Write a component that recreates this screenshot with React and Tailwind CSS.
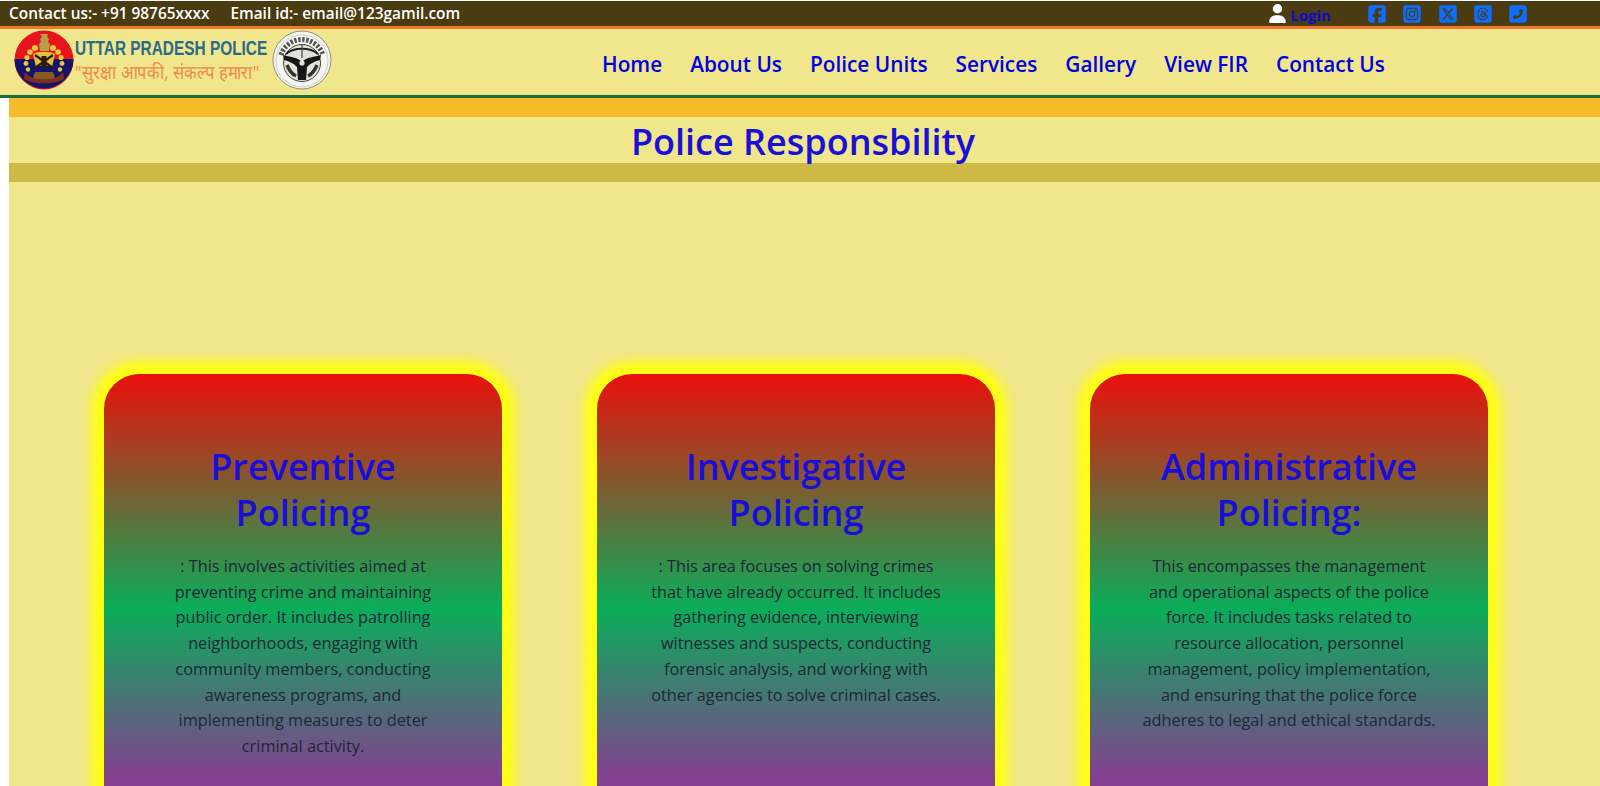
import React from 'react';
import { FaUser, FaSquareFacebook, FaSquareInstagram, FaSquareXTwitter, FaSquareThreads, FaSquarePhoneFlip } from 'react-icons/fa6';

const navLinks = ['Home', 'About Us', 'Police Units', 'Services', 'Gallery', 'View FIR', 'Contact Us'];

const cards = [
  {
    title: ['Preventive', 'Policing'],
    body: ': This involves activities aimed at preventing crime and maintaining public order. It includes patrolling neighborhoods, engaging with community members, conducting awareness programs, and implementing measures to deter criminal activity.',
  },
  {
    title: ['Investigative', 'Policing'],
    body: ': This area focuses on solving crimes that have already occurred. It includes gathering evidence, interviewing witnesses and suspects, conducting forensic analysis, and working with other agencies to solve criminal cases.',
  },
  {
    title: ['Administrative', 'Policing:'],
    body: 'This encompasses the management and operational aspects of the police force. It includes tasks related to resource allocation, personnel management, policy implementation, and ensuring that the police force adheres to legal and ethical standards.',
  },
];

const PoliceBadge = () => (
  <svg width="60" height="60" viewBox="0 0 60 60" className="shrink-0">
    <circle cx="30" cy="30" r="29.5" fill="#e8141c" />
    <path d="M0.5 29a29.5 29.5 0 0 0 59 0z" fill="#14146a" />
    {/* lion capital */}
    <path d="M26 4h8l-1 3 2 2-1 3 2 2-1 7h-9l-1-7 2-2-1-3 2-2z" fill="#b8a04a" />
    {/* wreath */}
    <g fill="#e6c83a">
      <circle cx="21" cy="18" r="3" /><circle cx="39" cy="18" r="3" />
      <circle cx="16" cy="22" r="2.8" /><circle cx="44" cy="22" r="2.8" />
      <circle cx="13" cy="27.5" r="2.6" /><circle cx="47" cy="27.5" r="2.6" />
      <circle cx="12" cy="33.5" r="2.4" /><circle cx="48" cy="33.5" r="2.4" />
      <circle cx="14" cy="39.5" r="2.2" /><circle cx="46" cy="39.5" r="2.2" />
    </g>
    {/* crossed batons and centre */}
    <path d="M19 24c5-3 17-3 22 0l-3 13c-4-2-12-2-16 0z" fill="#e0c438" />
    <path d="M21 38l18-13M39 38L21 25" stroke="#2a1c08" strokeWidth="2.2" />
    <rect x="27.5" y="26" width="5" height="11" fill="#2a1c08" />
    {/* scroll */}
    <path d="M11 42c6 10 32 10 38 0l1 6c-5 7-35 7-40 0z" fill="#7a2f1c" />
    <path d="M21 42h18l2 6c-6 2-16 2-22 0z" fill="#8a5a20" />
  </svg>
);

const StateEmblem = () => (
  <svg width="60" height="60" viewBox="0 0 60 60" className="shrink-0">
    <circle cx="30" cy="30" r="29" fill="#f6f6f0" stroke="#8f8f86" strokeWidth="1" />
    <circle cx="30" cy="31" r="26" fill="none" stroke="#b0b0a8" strokeWidth="0.6" />
    {/* ring of script at the top */}
    <path d="M9 25a22 22 0 0 1 42 0" fill="none" stroke="#555" strokeWidth="5" strokeDasharray="2.4 1.6" />
    <circle cx="30" cy="33" r="18.5" fill="#e2e2da" stroke="#444" strokeWidth="1" />
    {/* bow */}
    <path d="M14 24c8-7 24-7 32 0" fill="none" stroke="#222" strokeWidth="2" />
    {/* three armed fish mark */}
    <path d="M11 25c7 2 14 2 19 7 5-5 12-5 19-7l-1 5c-5 1-9 3-13 7l-1 13h-8l-1-13c-4-4-8-6-13-7z" fill="#161616" />
    <circle cx="30" cy="33" r="2.6" fill="#e2e2da" />
    <path d="M15 35c2 5 5 9 9 11M45 35c-2 5-5 9-9 11" fill="none" stroke="#333" strokeWidth="3.5" />
    <path d="M30 14v14" stroke="#444" strokeWidth="1.2" />
  </svg>
);

const App = () => {
  return (
    <div className="h-[786px] overflow-hidden bg-white font-['Open_Sans',sans-serif]">
      {/* Top bar */}
      <div className="mt-px flex h-[28px] items-center border-b-[3px] border-[#f0762a] bg-[#4a3b10] pl-[9px] text-[15.4px] font-semibold whitespace-nowrap text-white">
        <span>Contact us:- +91 98765xxxx</span>
        <span className="ml-[21px]">Email id:- email@123gamil.com</span>
        <div className="ml-[808px] flex items-center">
          <FaUser className="text-[19px] text-white" />
          <span className="mt-[3px] ml-[3px] text-[15px] font-bold text-[#0b0bd0]">Login</span>
          <div className="ml-[36px] flex gap-[15.4px] text-[#0d6efd]">
            <FaSquareFacebook className="text-[20px]" />
            <FaSquareInstagram className="text-[20px]" />
            <FaSquareXTwitter className="text-[20px]" />
            <FaSquareThreads className="text-[20px]" />
            <FaSquarePhoneFlip className="text-[20px]" />
          </div>
        </div>
      </div>

      {/* Nav */}
      <div className="flex h-[69px] items-center border-b-[3px] border-[#1c6b3a] bg-[#f0e68c]">
        <div className="ml-[14px] mb-[4px] flex items-center">
          <PoliceBadge />
          <div className="ml-[1px] w-[197px] overflow-hidden">
            <div className="origin-left scale-x-[0.77] font-['Liberation_Sans',sans-serif] text-[20px] leading-[23px] font-bold whitespace-nowrap text-[#2a6a8a]">UTTAR PRADESH POLICE</div>
            <div className="origin-left scale-x-[0.87] text-[19px] leading-[24px] whitespace-nowrap text-[#f0894a]">"सुरक्षा आपकी, संकल्प हमारा"</div>
          </div>
          <StateEmblem />
        </div>
        <nav className="mt-[6px] ml-[270px] flex gap-[28px] text-[20.8px] font-semibold whitespace-nowrap text-[#0000e0]">
          {navLinks.map((link) => (
            <a key={link}>{link}</a>
          ))}
        </nav>
      </div>

      {/* Main */}
      <div className="ml-[9px] h-[689px] overflow-hidden bg-[#f0e68c]">
        <div className="h-[19px] bg-[#f5bb28]" />
        <h1 className="h-[46px] pr-[3px] text-center text-[36px] leading-[50px] font-semibold text-[#1a0fd8]">Police Responsbility</h1>
        <div className="h-[19px] bg-[#cdb944]" />

        <div className="mt-[192px] ml-[95px] flex gap-[95px]">
          {cards.map((card) => (
            <div
              key={card.title[0]}
              className="h-[476px] w-[398px] shrink-0 rounded-[35px] bg-[linear-gradient(#ea100a,#0aad5a_235px,#843f90_405px)] px-[52px] pt-[70px] text-center shadow-[0_0_12px_13px_#ffff10]"
            >
              <h2 className="text-[36px] leading-[46px] font-semibold text-[#1a0fd8]">
                {card.title[0]}
                <br />
                {card.title[1]}
              </h2>
              <p className="mt-[18px] text-[16.3px] leading-[25.7px] text-[#1c2833]">{card.body}</p>
            </div>
          ))}
        </div>
      </div>
    </div>
  );
};

export default App;
